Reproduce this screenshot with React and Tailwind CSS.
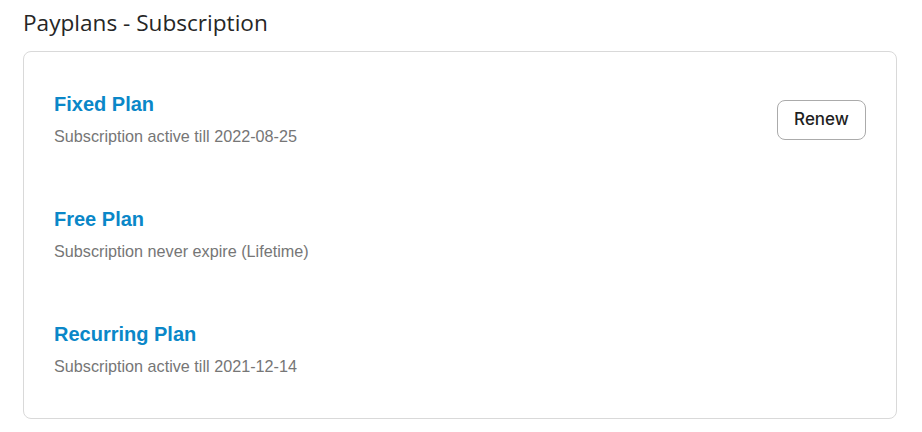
const PLANS = [
  { name: 'Fixed Plan', note: 'Subscription active till 2022-08-25', renew: true },
  { name: 'Free Plan', note: 'Subscription never expire (Lifetime)' },
  { name: 'Recurring Plan', note: 'Subscription active till 2021-12-14' },
];

export default function App() {
  return (
    <div className="w-[922px] h-[432px] bg-white px-[23px] pt-[7px]">
      <h2 className="font-['Open_Sans',sans-serif] text-[22.6px] leading-[32px] text-[#262626] mb-[12px]">
        Payplans - Subscription
      </h2>

      <div className="w-[874px] border border-[#d9d9d9] rounded-[8px] px-[30px] pt-[40px] pb-[40px] flex flex-col gap-[59px]">
        {PLANS.map((p) => (
          <div key={p.name} className="flex items-center justify-between">
            <div className="font-['Liberation_Sans',Arial,sans-serif]">
              <p className="text-[20px] leading-[24px] font-bold text-[#0a87c8] mb-2">{p.name}</p>
              <p className="text-[16.2px] leading-[24px] text-[#767676]">{p.note}</p>
            </div>
            {p.renew && (
              <button className="w-[89px] h-[40px] rounded-[8px] border border-[#ababab] bg-white font-['Inter',sans-serif] text-[17px] font-medium text-[#1f1f1f]">
                Renew
              </button>
            )}
          </div>
        ))}
      </div>
    </div>
  );
}
